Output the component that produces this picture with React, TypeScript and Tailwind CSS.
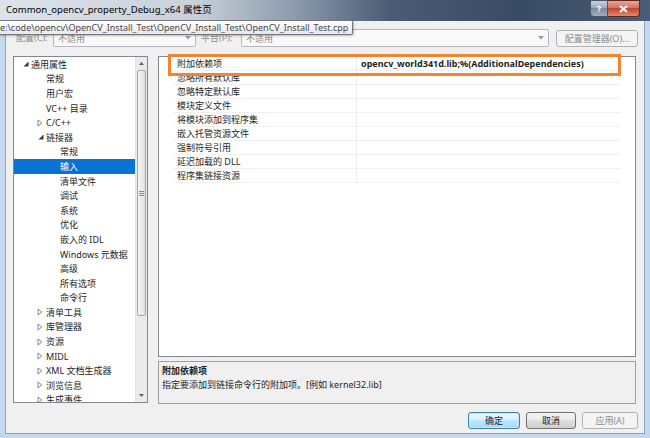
import React from 'react';

type TreeItem = { label: string; level: 0 | 1 | 2; arrow?: 'open' | 'closed'; selected?: boolean };

const treeItems: TreeItem[] = [
  { label: '通用属性', level: 0, arrow: 'open' },
  { label: '常规', level: 1 },
  { label: '用户宏', level: 1 },
  { label: 'VC++ 目录', level: 1 },
  { label: 'C/C++', level: 1, arrow: 'closed' },
  { label: '链接器', level: 1, arrow: 'open' },
  { label: '常规', level: 2 },
  { label: '输入', level: 2, selected: true },
  { label: '清单文件', level: 2 },
  { label: '调试', level: 2 },
  { label: '系统', level: 2 },
  { label: '优化', level: 2 },
  { label: '嵌入的 IDL', level: 2 },
  { label: 'Windows 元数据', level: 2 },
  { label: '高级', level: 2 },
  { label: '所有选项', level: 2 },
  { label: '命令行', level: 2 },
  { label: '清单工具', level: 1, arrow: 'closed' },
  { label: '库管理器', level: 1, arrow: 'closed' },
  { label: '资源', level: 1, arrow: 'closed' },
  { label: 'MIDL', level: 1, arrow: 'closed' },
  { label: 'XML 文档生成器', level: 1, arrow: 'closed' },
  { label: '浏览信息', level: 1, arrow: 'closed' },
  { label: '生成事件', level: 1, arrow: 'closed' },
];

const properties = [
  { name: '附加依赖项', value: 'opencv_world341d.lib;%(AdditionalDependencies)' },
  { name: '忽略所有默认库', value: '' },
  { name: '忽略特定默认库', value: '' },
  { name: '模块定义文件', value: '' },
  { name: '将模块添加到程序集', value: '' },
  { name: '嵌入托管资源文件', value: '' },
  { name: '强制符号引用', value: '' },
  { name: '延迟加载的 DLL', value: '' },
  { name: '程序集链接资源', value: '' },
];

const indent = { 0: 'pl-[7px]', 1: 'pl-[22px]', 2: 'pl-[36px]' };

const Arrow = ({ type }: { type?: 'open' | 'closed' }) => {
  if (type === 'open') {
    return (
      <svg width="6" height="6" viewBox="0 0 6 6" className="ml-[2px]">
        <path d="M5.5 0.5 L5.5 5.5 L0.5 5.5 Z" fill="#3a3a3a" />
      </svg>
    );
  }
  if (type === 'closed') {
    return (
      <svg width="6" height="8" viewBox="0 0 6 8" className="ml-[1px]">
        <path d="M1 1 L4.8 4 L1 7 Z" fill="#fff" stroke="#7a7a7a" strokeWidth="0.9" />
      </svg>
    );
  }
  return null;
};

const Combo = ({ className }: { className: string }) => (
  <div className={`h-[18px] border border-[#b5b9bd] bg-[#f9f9f9] rounded-[2px] flex items-center justify-between pl-[4px] pr-[4px] text-[#8a8a8a] ${className}`}>
    <span>不适用</span>
    <svg width="6" height="4" viewBox="0 0 6 4">
      <path d="M0 0 L6 0 L3 3.5 Z" fill="#9a9a9a" />
    </svg>
  </div>
);

const Button = ({ label, primary, disabled }: { label: string; primary?: boolean; disabled?: boolean }) => (
  <div
    className={`h-[17px] flex items-center justify-center rounded-[3px] border ${
      primary
        ? 'w-[52px] border-[#3c7fb1] bg-[linear-gradient(#eaf6fd,#d9f0fc_50%,#bee6fd_50%,#a7d9f5)] shadow-[inset_0_0_0_1px_#cbe8f8]'
        : disabled
        ? 'w-[56px] border-[#adb2b5] bg-[#f4f4f4] text-[#8b8b8b]'
        : 'w-[50px] border-[#707070] bg-[linear-gradient(#f2f2f2,#ebebeb_50%,#dddddd_50%,#cfcfcf)]'
    }`}
  >
    {label}
  </div>
);

export default function App() {
  return (
    <div
      className="relative w-[650px] h-[438px] overflow-hidden bg-[#c4d8ee] flex flex-col text-[9px] leading-none text-[#1e1e1e]"
      style={{ fontFamily: '"Noto Sans", "Noto Sans CJK SC", sans-serif' }}
    >
      {/* title bar */}
      <div className="h-[21px] shrink-0 flex items-center justify-between pl-[6px] pr-[10px] bg-[linear-gradient(to_right,#dde3ea_0%,#c8d0da_30%,#8a98aa_46%,#4a5b73_60%,#394a63_80%,#4a5d76_100%)]">
        <span className="text-[9.5px] text-black pb-[1px]">Common_opencv_property_Debug_x64 属性页</span>
        <div className="flex self-start h-[17px]">
          <div className="w-[18px] h-full border border-[#4b5566] rounded-bl-[4px] bg-[linear-gradient(#c9d1dc,#9aa6b6_50%,#7c8a9d_50%,#a3afbf)] flex items-center justify-center text-white text-[9px] font-bold">
            ?
          </div>
          <div className="w-[32px] h-full border border-[#5b2a22] border-l-0 rounded-br-[4px] bg-[linear-gradient(#e8a595,#d2705c_50%,#c2452c_50%,#db8a6f)] flex items-center justify-center">
            <svg width="9" height="8" viewBox="0 0 9 8">
              <path d="M1 1 L8 7 M8 1 L1 7" stroke="#fff" strokeWidth="2" />
            </svg>
          </div>
        </div>
      </div>

      {/* client */}
      <div className="flex-1 mx-[5px] border-x border-b border-[#8da4bf] bg-[#f0f0f0] flex flex-col">
        <div className="flex items-end pt-[8px] pl-[10px]">
          <span className="w-[37px] text-[#8d8d8d] pb-[5px]">配置(C):</span>
          <Combo className="w-[143px]" />
          <span className="w-[45px] pl-[5px] text-[#8d8d8d] pb-[5px]">平台(P):</span>
          <Combo className="w-[308px]" />
          <div className="ml-[7px] w-[82px] h-[17px] border border-[#adb2b5] bg-[#f4f4f4] rounded-[3px] flex items-center justify-center text-[#8b8b8b]">
            配置管理器(O)...
          </div>
        </div>

        <div className="flex items-start mt-[9px] pl-[7px] gap-[10px]">
          {/* tree */}
          <div className="w-[135px] h-[347px] border border-[#828790] bg-white flex overflow-hidden">
            <div className="flex-1 overflow-hidden">
              {treeItems.map((item, i) => (
                <div
                  key={i}
                  className={`h-[14.6px] flex items-center ${indent[item.level]} ${
                    item.selected ? 'bg-[#0a72d2] text-white' : ''
                  }`}
                >
                  <span className="w-[10px] flex items-center">
                    <Arrow type={item.arrow} />
                  </span>
                  <span>{item.label}</span>
                </div>
              ))}
            </div>
            <div className="w-[12px] flex flex-col bg-[#eaeaea] border-l border-[#e2e2e2]">
              <div className="h-[13px] flex items-center justify-center">
                <svg width="5" height="3" viewBox="0 0 5 3">
                  <path d="M0 3 L5 3 L2.5 0 Z" fill="#5f5f5f" />
                </svg>
              </div>
              <div className="h-[246px] mx-[1px] rounded-[2px] border border-[#a6a6a6] bg-[linear-gradient(to_right,#f3f3f3,#e2e2e2)] flex flex-col items-center justify-center gap-[1px]">
                <div className="w-[5px] h-[1px] bg-[#8c8c8c]" />
                <div className="w-[5px] h-[1px] bg-[#8c8c8c]" />
                <div className="w-[5px] h-[1px] bg-[#8c8c8c]" />
              </div>
              <div className="flex-1" />
              <div className="h-[14px] flex items-center justify-center">
                <svg width="5" height="3" viewBox="0 0 5 3">
                  <path d="M0 0 L5 0 L2.5 3 Z" fill="#5f5f5f" />
                </svg>
              </div>
            </div>
          </div>

          {/* right column */}
          <div className="w-[478px] flex flex-col gap-[4px]">
            <div className="h-[301px] border border-[#828790] bg-white pl-[14px] pr-[15px]">
              {properties.map((p, i) => (
                <div key={i} className="h-[14px] flex border-b border-[#f1f1f1]">
                  <div className="w-[184px] pl-[4px] flex items-center border-r border-[#ececec]">{p.name}</div>
                  <div className="flex-1 pl-[4px] flex items-center font-bold">{p.value}</div>
                </div>
              ))}
            </div>
            <div className="h-[43px] border border-[#a0a0a0] bg-[#f0f0f0] pl-[3px] pt-[4px] flex flex-col gap-[5px]">
              <span className="font-bold">附加依赖项</span>
              <span>指定要添加到链接命令行的附加项。[例如 kernel32.lib]</span>
            </div>
          </div>
        </div>

        <div className="flex justify-end gap-[6px] mt-[8px] pr-[6px]">
          <Button label="确定" primary />
          <Button label="取消" />
          <Button label="应用(A)" disabled />
        </div>
      </div>
      <div className="h-[4px] shrink-0" />

      {/* tooltip over the config row */}
      <div className="absolute left-[-3px] top-[20px] w-[356px] h-[15px] border border-[#767676] rounded-[2px] bg-[linear-gradient(#ffffff,#e6e7f0)] shadow-[1px_1px_2px_rgba(0,0,0,0.25)] flex items-center pl-[2px] text-[#4a4a4a]">
        e:\code\opencv\OpenCV_Install_Test\OpenCV_Install_Test\OpenCV_Install_Test.cpp
      </div>

      {/* highlight frame */}
      <div className="absolute left-[168px] top-[54px] w-[453px] h-[22px] border-[3px] border-[#f5842c]" />
    </div>
  );
}
